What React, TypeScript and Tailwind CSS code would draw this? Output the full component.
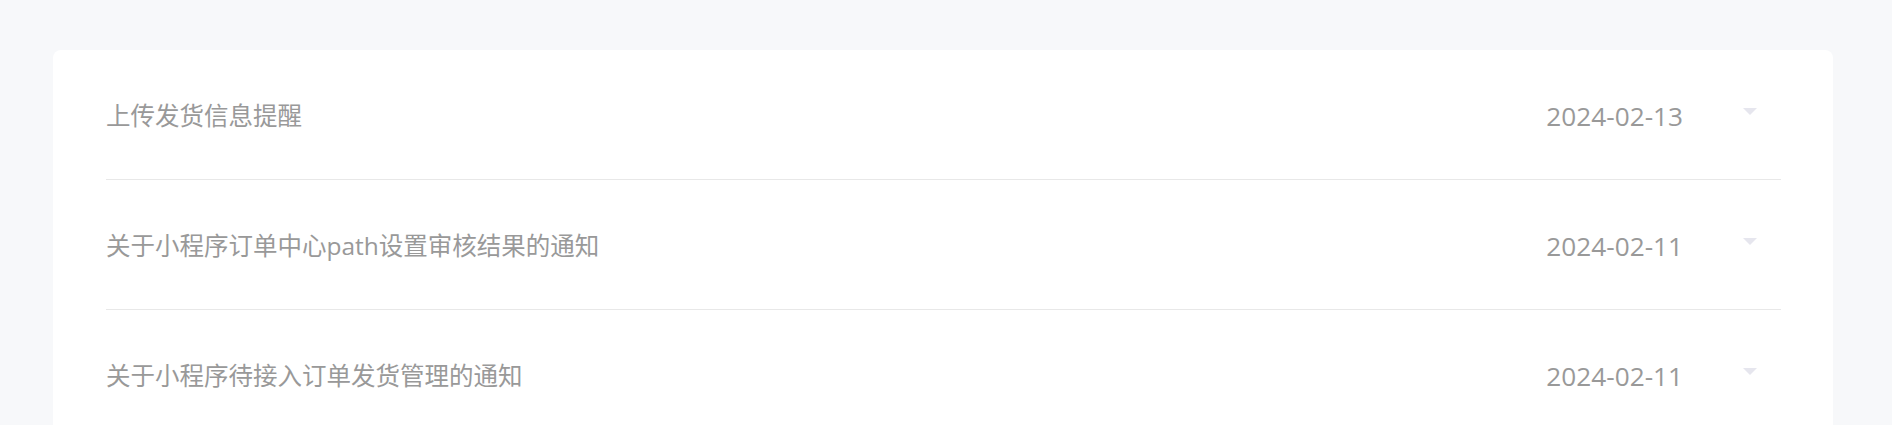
import React from "react";

const items = [
  { title: "上传发货信息提醒", date: "2024-02-13" },
  { title: "关于小程序订单中心path设置审核结果的通知", date: "2024-02-11" },
  { title: "关于小程序待接入订单发货管理的通知", date: "2024-02-11" },
];

export default function App() {
  return (
    <div
      className="min-h-screen bg-[#f7f8fa] pt-[50px] pl-[53px] pr-[59px]"
      style={{ fontFamily: '"Open Sans", "Noto Sans CJK SC", sans-serif' }}
    >
      <div className="bg-white rounded-[8px] pl-[53px] pr-[52px]">
        {items.map((it, i) => (
          <div
            key={i}
            className="flex items-center h-[130px] pt-[2px] border-b border-[#e8e8e8]"
          >
            <div className="flex-1 text-[24.5px] leading-[30px] text-[#999999]">
              {it.title}
            </div>
            <div className="text-[26.2px] leading-[30px] text-[#999999]">
              {it.date}
            </div>
            <div className="ml-[60px] mr-[24px] -mt-[8px] w-0 h-0 border-l-[7px] border-r-[7px] border-t-[7px] border-l-transparent border-r-transparent border-t-[#e6e6ee]" />
          </div>
        ))}
      </div>
    </div>
  );
}
